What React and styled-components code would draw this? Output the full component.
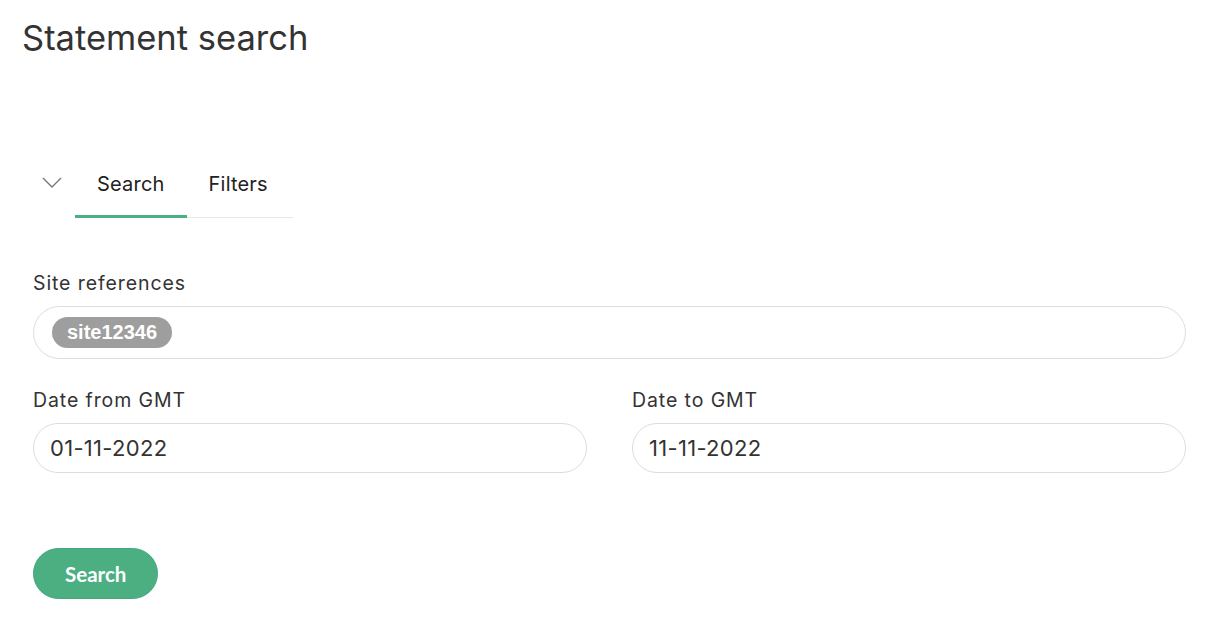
import styled, {createGlobalStyle} from "styled-components";

const GlobalStyle = createGlobalStyle`
  body {
    margin: 0;
    background: #fff;
    font-family: Inter, "Noto Sans", sans-serif;
    color: #333;
  }
`;

const Page = styled.main`
  padding: 16px 21px 0 22px;
`;

const Title = styled.h1`
  margin: 0;
  font-family: Inter, sans-serif;
  font-size: 34.5px;
  font-weight: 400;
  color: #333;
  line-height: 44px;
`;

const TabsBar = styled.div`
  display: flex;
  align-items: stretch;
  margin-top: 104px;
  margin-left: 20px;
`;

const Toggle = styled.button`
  display: flex;
  align-items: flex-start;
  justify-content: flex-start;
  width: 33px;
  padding: 13px 0 0;
  border: none;
  background: none;
  color: #777;
`;

const TabList = styled.div`
  display: flex;
  width: 218px;
  border-bottom: 1px solid #e8e8e8;
`;

const Tab = styled.button`
  padding: 8px 22px 19px;
  margin-bottom: -1px;
  border: none;
  border-bottom: 3px solid ${p => (p.$active ? "#4caf82" : "transparent")};
  background: none;
  font-family: Inter, sans-serif;
  font-size: 20px;
  letter-spacing: 0.2px;
  line-height: 24px;
  color: #222;
  cursor: pointer;
`;

const Form = styled.form`
  display: flex;
  flex-direction: column;
  gap: 29px;
  padding: 53px 0 0 11px;
`;

const Row = styled.div`
  display: grid;
  grid-template-columns: 1fr 1fr;
  gap: 45px;
`;

const Field = styled.label`
  display: flex;
  flex-direction: column;
  gap: 11px;
`;

const Label = styled.span`
  font-size: 19.5px;
  letter-spacing: 0.9px;
  line-height: 24px;
  color: #333;
`;

const Box = styled.div`
  display: flex;
  align-items: center;
  height: ${p => p.$h || 50}px;
  box-sizing: border-box;
  padding: 0 ${p => p.$pad || 16}px;
  border: 1px solid #ddd;
  border-radius: 30px;
  font-size: 22px;
  letter-spacing: 0.3px;
  color: #333;
`;

const Chip = styled.span`
  display: inline-flex;
  align-items: center;
  height: 31px;
  padding: 0 15px;
  border-radius: 16px;
  background: #9e9e9e;
  color: #fff;
  font-family: "Liberation Sans", Arial, sans-serif;
  font-weight: 700;
  font-size: 20px;
  letter-spacing: 0;
`;

const SubmitButton = styled.button`
  align-self: flex-start;
  margin-top: 46px;
  height: 51px;
  padding: 0 31px;
  border: 1px solid #43a97c;
  border-radius: 26px;
  background: #4caf82;
  color: #fff;
  font-family: Lato, sans-serif;
  font-weight: 700;
  font-size: 20.5px;
  cursor: pointer;
`;

const Chevron = () => (
  <svg width="20" height="11" viewBox="0 0 20 11" fill="none" stroke="currentColor" strokeWidth="1.4">
    <path d="M1 1l9 9 9-9"/>
  </svg>
);

const App = () => {
  return (
    <>
      <GlobalStyle/>
      <Page>
        <Title>Statement search</Title>
        <TabsBar>
          <Toggle type="button"><Chevron/></Toggle>
          <TabList>
            <Tab $active type="button">Search</Tab>
            <Tab type="button">Filters</Tab>
          </TabList>
        </TabsBar>
        <Form onSubmit={e => e.preventDefault()}>
          <Field>
            <Label>Site references</Label>
            <Box $h={53} $pad={18}>
              <Chip>site12346</Chip>
            </Box>
          </Field>
          <Row>
            <Field>
              <Label>Date from GMT</Label>
              <Box>01-11-2022</Box>
            </Field>
            <Field>
              <Label>Date to GMT</Label>
              <Box>11-11-2022</Box>
            </Field>
          </Row>
          <SubmitButton type="submit">Search</SubmitButton>
        </Form>
      </Page>
    </>
  );
};

export default App;
